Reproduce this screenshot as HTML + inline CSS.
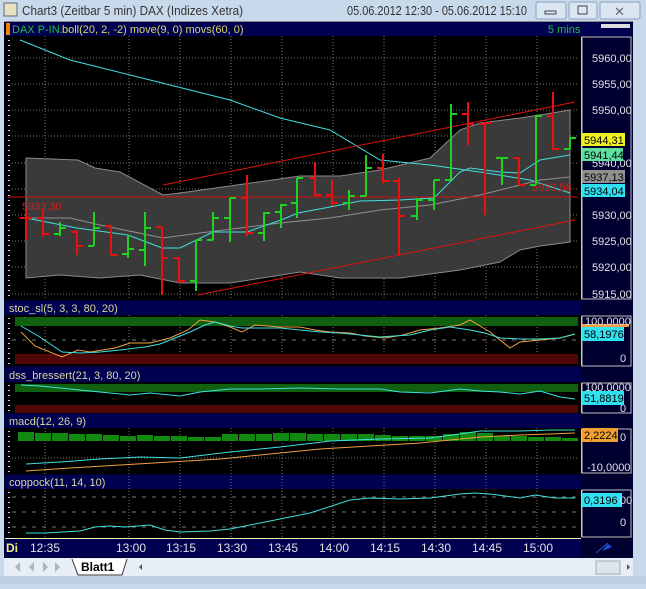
<!DOCTYPE html>
<html><head><meta charset="utf-8"><style>
body{margin:0;width:646px;height:584px;overflow:hidden;background:#c9d9ec;font-family:"Liberation Sans",sans-serif;}
</style></head><body>
<svg width="646" height="584" xmlns="http://www.w3.org/2000/svg" font-family="Liberation Sans, sans-serif">
<rect width="646" height="584" fill="#c9d9ec"/>
<rect x="0" y="576" width="646" height="8" fill="#c0d0e4"/>
<!-- title bar -->
<rect x="4" y="3" width="13" height="13" fill="#e8e0c0" stroke="#5a6a80"/>
<text x="22" y="15" font-size="12.5" fill="#333" textLength="221" lengthAdjust="spacingAndGlyphs">Chart3 (Zeitbar 5 min)  DAX (Indizes Xetra)</text>
<text x="347" y="15" font-size="12.5" fill="#333" textLength="180" lengthAdjust="spacingAndGlyphs">05.06.2012 12:30 - 05.06.2012 15:10</text>
<rect x="536" y="2" width="30" height="17" rx="2" fill="#dbe6f3" stroke="#8da2bd"/>
<rect x="545" y="11" width="11" height="3" fill="none" stroke="#445"/>
<rect x="569" y="2" width="28" height="17" rx="2" fill="#dbe6f3" stroke="#8da2bd"/>
<rect x="578" y="6" width="9" height="8" fill="none" stroke="#445"/>
<rect x="600" y="2" width="40" height="17" rx="2" fill="#dbe6f3" stroke="#8da2bd"/>
<text x="614" y="16" font-size="13" fill="#667">✕</text>
<!-- chart frame -->
<rect x="4" y="21" width="629" height="537" fill="#000030"/>
<rect x="4" y="21" width="629" height="1" fill="#888"/>
<!-- headers -->
<rect x="5" y="22" width="627" height="14" fill="#000050"/>
<rect x="6" y="23" width="4" height="12" fill="#f08000"/>
<text x="12" y="33" font-size="11" fill="#20c040">DAX P-IN.</text>
<text x="62" y="33" font-size="11" fill="#d8d860">boll(20, 2, -2) move(9, 0) movs(60, 0)</text>
<text x="548" y="33" font-size="11" fill="#20c040">5 mins</text>
<rect x="601" y="24" width="29" height="4" fill="#ddd"/>
<rect x="5" y="301" width="576" height="14" fill="#000050"/>
<text x="9" y="312" font-size="11" fill="#d8d8a0">stoc_sl(5, 3, 3, 80, 20)</text>
<rect x="5" y="367" width="576" height="15" fill="#000050"/>
<text x="9" y="379" font-size="11" fill="#d8d8a0">dss_bressert(21, 3, 80, 20)</text>
<rect x="5" y="414" width="576" height="14" fill="#000050"/>
<text x="9" y="425" font-size="11" fill="#d8d8a0">macd(12, 26, 9)</text>
<rect x="5" y="475" width="576" height="14" fill="#000050"/>
<text x="9" y="486" font-size="11" fill="#d8d8a0">coppock(11, 14, 10)</text>
<!-- plots bg -->
<rect x="5" y="36" width="576" height="264" fill="#000"/>
<rect x="5" y="315" width="576" height="51" fill="#000"/>
<rect x="5" y="382" width="576" height="31" fill="#000"/>
<rect x="5" y="428" width="576" height="46" fill="#000"/>
<rect x="5" y="489" width="576" height="49" fill="#000"/>
<!-- right axis boxes -->
<g fill="none" stroke="#c0c0c0" stroke-width="1">
<rect x="582" y="37" width="49" height="262"/>
<rect x="582" y="316" width="49" height="50"/>
<rect x="582" y="383" width="49" height="30"/>
<rect x="582" y="429" width="49" height="44"/>
<rect x="582" y="490" width="49" height="47"/>
</g>
<g stroke="#e0d060" stroke-width="1">
<line x1="581.5" y1="37" x2="581.5" y2="299"/><line x1="581.5" y1="316" x2="581.5" y2="366"/>
<line x1="581.5" y1="383" x2="581.5" y2="413"/><line x1="581.5" y1="429" x2="581.5" y2="473"/><line x1="581.5" y1="490" x2="581.5" y2="537"/>
</g>
<!-- left ticks -->
<g stroke="#ccc" stroke-width="2" stroke-dasharray="1,4">
<line x1="9" y1="40" x2="9" y2="298"/><line x1="9" y1="318" x2="9" y2="364"/><line x1="9" y1="385" x2="9" y2="412"/><line x1="9" y1="431" x2="9" y2="472"/><line x1="9" y1="492" x2="9" y2="536"/>
</g>
<!-- grid -->
<g stroke="#777" stroke-width="1" stroke-dasharray="1,2">
<line x1="12" y1="58" x2="578" y2="58"/><line x1="12" y1="84" x2="578" y2="84"/><line x1="12" y1="110" x2="578" y2="110"/><line x1="12" y1="136" x2="578" y2="136"/><line x1="12" y1="163" x2="578" y2="163"/><line x1="12" y1="189" x2="578" y2="189"/><line x1="12" y1="215" x2="578" y2="215"/><line x1="12" y1="241" x2="578" y2="241"/><line x1="12" y1="267" x2="578" y2="267"/><line x1="12" y1="294" x2="578" y2="294"/>
<line x1="45" y1="36" x2="45" y2="300"/><line x1="129" y1="36" x2="129" y2="300"/><line x1="180" y1="36" x2="180" y2="300"/><line x1="231" y1="36" x2="231" y2="300"/><line x1="282" y1="36" x2="282" y2="300"/><line x1="333" y1="36" x2="333" y2="300"/><line x1="384" y1="36" x2="384" y2="300"/><line x1="435" y1="36" x2="435" y2="300"/><line x1="486" y1="36" x2="486" y2="300"/><line x1="537" y1="36" x2="537" y2="300"/>
<g>
<line x1="45" y1="315" x2="45" y2="366"/><line x1="129" y1="315" x2="129" y2="366"/><line x1="180" y1="315" x2="180" y2="366"/><line x1="231" y1="315" x2="231" y2="366"/><line x1="282" y1="315" x2="282" y2="366"/><line x1="333" y1="315" x2="333" y2="366"/><line x1="384" y1="315" x2="384" y2="366"/><line x1="435" y1="315" x2="435" y2="366"/><line x1="486" y1="315" x2="486" y2="366"/><line x1="537" y1="315" x2="537" y2="366"/>
<line x1="45" y1="428" x2="45" y2="538"/><line x1="129" y1="428" x2="129" y2="538"/><line x1="180" y1="428" x2="180" y2="538"/><line x1="231" y1="428" x2="231" y2="538"/><line x1="282" y1="428" x2="282" y2="538"/><line x1="333" y1="428" x2="333" y2="538"/><line x1="384" y1="428" x2="384" y2="538"/><line x1="435" y1="428" x2="435" y2="538"/><line x1="486" y1="428" x2="486" y2="538"/><line x1="537" y1="428" x2="537" y2="538"/>
</g>
<line x1="12" y1="340" x2="578" y2="340" stroke-dasharray="4,6"/>
<line x1="12" y1="458" x2="578" y2="458"/><line x1="12" y1="497" x2="578" y2="497" stroke-dasharray="4,6"/><line x1="12" y1="512" x2="578" y2="512" stroke-dasharray="4,6"/><line x1="12" y1="527" x2="578" y2="527" stroke-dasharray="4,6"/>
</g>
<!-- bollinger fill -->
<polygon fill="#3a3a3a" stroke="#8a8a8a" stroke-width="1" points="26,158 78,160 95,168 120,172 163,195 180,193 230,186 300,176 340,176 380,170 430,158 460,130 480,123 520,118 540,115 570,110 570,242 540,246 520,250 500,262 460,270 400,278 340,278 300,272 230,283 180,283 140,275 100,278 60,275 26,278"/>
<polyline fill="none" stroke="#909090" points="26,218 70,218 100,225 163,238 200,233 240,228 280,223 330,218 380,210 430,205 480,195 520,185 540,180 570,177"/>
<polyline fill="none" stroke="#40e0e0" points="20,40 70,60 150,80 230,100 280,118 330,130 380,160 430,165 480,172 530,180 570,193"/>
<polyline fill="none" stroke="#40e0e0" points="26,218 77,228 128,235 162,248 180,248 213,232 247,232 281,220 298,213 330,207 360,201 400,200 434,198 460,172 470,168 500,172 520,173 540,160 570,155"/>
<line x1="8" y1="197" x2="578" y2="197" stroke="#d01010"/>
<line x1="163" y1="185" x2="575" y2="102" stroke="#e01010"/>
<line x1="198" y1="295" x2="575" y2="220" stroke="#e01010"/>
<text x="22" y="210" font-size="11" fill="#d02020">5933,30</text>
<text x="532" y="191" font-size="11" fill="#d02020">5933,56</text>
<!-- bars -->
<g stroke-width="2" fill="none">
<path stroke="#e81010" d="M26 210V240M20 218H26M26 218H32 M43 210V237M37 218H43M43 234H49 M77 230V255M71 232H77M77 246H83 M111 225V255M105 226H111M111 255H117 M162 227V295M156 227H162M162 258H168 M179 258V283M173 258H179M179 281H185 M247 175V236M241 198H247M247 233H253 M315 162V196M309 178H315M315 195H321 M332 180V206M326 195H332M332 203H338 M383 154V183M377 168H383M383 181H389 M399 178V255M393 181H399M399 216H405 M468 102V145M462 114H468M468 124H474 M485 122V215M479 124H485M485 123H491 M519 158V185M513 158H519M519 185H525 M553 92V150M547 116H553M553 149H559"/>
<path stroke="#20d020" d="M60 222V236M54 234H60M60 228H66 M94 212V246M88 246H94M94 228H100 M128 235V258M122 254H128M128 249H134 M145 212V266M139 250H145M145 228H151 M196 240V291M190 281H196M196 240H202 M213 212V240M207 240H213M213 218H219 M230 198V242M224 218H230M230 198H236 M264 212V241M258 233H264M264 213H270 M281 204V228M275 212H281M281 205H287 M297 178V218M291 203H297M297 178H303 M349 190V210M343 203H349M349 196H355 M366 155V196M360 196H366M366 168H372 M417 198V220M411 216H417M417 200H423 M434 180V210M428 200H434M434 180H440 M451 104V180M445 180H451M451 114H457 M502 158V185M496 158H502M502 158H508 M536 115V185M530 185H536M536 116H542 M570 138V149M564 149H570M570 138H576"/>
</g>
<!-- price labels -->
<g font-size="11" fill="#e0e0e0">
<text x="592" y="62">5960,00</text><text x="592" y="88">5955,00</text><text x="592" y="114">5950,00</text><text x="592" y="167">5940,00</text><text x="592" y="219">5930,00</text><text x="592" y="245">5925,00</text><text x="592" y="271">5920,00</text><text x="592" y="298">5915,00</text>
</g>
<rect x="582" y="133" width="43" height="13" fill="#f0f020"/><text x="584" y="144" font-size="11" fill="#000">5944,31</text>
<rect x="582" y="148" width="41" height="13" fill="#60e0a0"/><text x="584" y="159" font-size="11" fill="#000">5941,44</text>
<rect x="582" y="170" width="43" height="13" fill="#909090"/><text x="584" y="181" font-size="11" fill="#000">5937,13</text>
<rect x="582" y="184" width="43" height="13" fill="#30e0f0"/><text x="584" y="195" font-size="11" fill="#000">5934,04</text>
<!-- stoc -->
<rect x="15" y="317" width="563" height="9" fill="#106010"/>
<rect x="15" y="354" width="563" height="10" fill="#500808"/>
<polyline fill="none" stroke="#f0a040" points="21,332 35,346 62,357 78,350 90,352 115,348 130,343 150,343 170,338 188,330 200,320 215,322 230,327 242,332 255,325 280,327 300,327 315,330 330,332 350,333 365,336 385,338 403,335 420,330 440,328 460,325 470,320 480,326 490,332 510,348 520,342 540,340 560,338 575,334"/>
<polyline fill="none" stroke="#40e0e0" points="21,326 40,337 62,352 80,353 100,352 120,350 145,347 160,344 175,338 190,332 205,325 215,322 230,326 242,328 255,328 280,328 300,330 320,332 340,333 360,335 380,337 410,335 430,330 450,327 470,330 485,333 500,338 520,339 540,339 560,338 575,334"/>
<rect x="582" y="324" width="47" height="3" fill="#f0a040"/>
<rect x="582" y="327" width="42" height="14" fill="#30e0f0"/><text x="584" y="338" font-size="11" fill="#000">58,1976</text>
<text x="585" y="325" font-size="11" fill="#e0e0e0">100,0000</text><text x="620" y="362" font-size="11" fill="#e0e0e0">0</text>
<!-- dss -->
<rect x="15" y="384" width="563" height="8" fill="#106010"/>
<rect x="15" y="405" width="563" height="8" fill="#500808"/>
<polyline fill="none" stroke="#40e0e0" points="21,385 40,386 60,388 80,390 100,392 130,395 150,393 180,396 200,392 230,389 260,389 300,388 340,389 380,389 400,392 430,393 460,389 480,391 500,392 520,394 540,391 560,397 575,399"/>
<text x="585" y="391" font-size="11" fill="#e0e0e0">100,0000</text><text x="620" y="412" font-size="11" fill="#e0e0e0">0</text>
<rect x="582" y="391" width="42" height="14" fill="#30e0f0"/><text x="584" y="402" font-size="11" fill="#000">51,8819</text>
<!-- macd -->
<g fill="#108a10">
<rect x="18" y="432" width="16" height="9"/><rect x="35" y="433" width="16" height="8"/><rect x="52" y="433" width="16" height="8"/><rect x="69" y="434" width="16" height="7"/><rect x="86" y="434" width="16" height="7"/><rect x="103" y="435" width="16" height="6"/><rect x="120" y="436" width="16" height="5"/><rect x="137" y="435" width="16" height="6"/><rect x="154" y="436" width="16" height="5"/><rect x="171" y="436" width="16" height="5"/><rect x="188" y="437" width="16" height="4"/><rect x="205" y="437" width="16" height="4"/><rect x="222" y="434" width="16" height="7"/><rect x="239" y="434" width="16" height="7"/><rect x="256" y="434" width="16" height="7"/><rect x="273" y="433" width="16" height="8"/><rect x="290" y="433" width="16" height="8"/><rect x="307" y="434" width="16" height="7"/><rect x="324" y="434" width="16" height="7"/><rect x="341" y="434" width="16" height="7"/><rect x="358" y="434" width="16" height="7"/><rect x="375" y="435" width="16" height="6"/><rect x="392" y="436" width="16" height="5"/><rect x="409" y="436" width="16" height="5"/><rect x="426" y="436" width="16" height="5"/><rect x="443" y="434" width="16" height="7"/><rect x="460" y="432" width="16" height="9"/><rect x="477" y="433" width="16" height="8"/><rect x="494" y="436" width="16" height="5"/><rect x="511" y="436" width="16" height="5"/><rect x="528" y="437" width="16" height="4"/><rect x="545" y="437" width="16" height="4"/><rect x="562" y="438" width="16" height="3"/>
</g>
<polyline fill="none" stroke="#40e0e0" points="26,464 60,462 100,459 140,457 180,458 230,452 280,447 330,441 380,439 430,438 460,434 480,431 520,431 550,430 575,430"/>
<polyline fill="none" stroke="#f0a040" points="26,471 70,468 120,465 170,462 220,459 270,454 320,449 370,446 420,443 450,440 480,437 520,435 550,434 575,433"/>
<rect x="582" y="428" width="36" height="14" fill="#f0a030"/><text x="584" y="439" font-size="11" fill="#000">2,2224</text>
<text x="620" y="441" font-size="11" fill="#e0e0e0">0</text><text x="587" y="471" font-size="11" fill="#e0e0e0">-10,0000</text>
<!-- coppock -->
<polyline fill="none" stroke="#40e0e0" points="26,533 45,533 80,531 95,527 110,526 125,527 150,525 165,530 180,532 210,531 230,529 260,523 285,518 310,513 350,500 370,498 400,499 430,498 460,494 475,493 490,494 520,498 535,495 555,498 575,498"/>
<rect x="582" y="493" width="40" height="14" fill="#30e0f0"/><text x="584" y="504" font-size="11" fill="#000">0,3196</text>
<text x="620" y="504" font-size="11" fill="#e0e0e0">00</text><text x="620" y="526" font-size="11" fill="#e0e0e0">0</text>
<!-- time axis -->
<rect x="5" y="539" width="576" height="18" fill="#000050"/>
<rect x="5" y="538" width="576" height="1" fill="#f0f0a0"/>
<g font-size="12" fill="#e0e0e0">
<text x="6" y="552" fill="#f0f080" font-weight="bold">Di</text><text x="30" y="552">12:35</text><text x="116" y="552">13:00</text><text x="166" y="552">13:15</text><text x="217" y="552">13:30</text><text x="268" y="552">13:45</text><text x="319" y="552">14:00</text><text x="370" y="552">14:15</text><text x="421" y="552">14:30</text><text x="472" y="552">14:45</text><text x="523" y="552">15:00</text>
</g>
<path d="M602 551 L608 544 L612 547 Z" fill="#2050e0"/><line x1="596" y1="553" x2="608" y2="543" stroke="#3050d0"/>
<!-- tab bar -->
<rect x="4" y="558" width="629" height="18" fill="#e8eef5"/>
<g fill="#a8b4c4"><path d="M9 562v10"/><path d="M15 567l5-5v10z"/><path d="M29 567l5-5v10z"/><path d="M43 562l5 5-5 5z"/><path d="M55 562l5 5-5 5z"/></g>
<path d="M72 559 L78 575 L122 575 L127 559" fill="#fff" stroke="#333"/>
<text x="81" y="571" font-size="12" font-weight="bold" fill="#000">Blatt1</text>
<path d="M142 564 l-3 3 3 3z" fill="#555"/>
<rect x="596" y="561" width="24" height="13" fill="#dde4ec" stroke="#a0aab8"/>
<path d="M627 564 l3 3 -3 3z" fill="#555"/>
</svg>
</body></html>
